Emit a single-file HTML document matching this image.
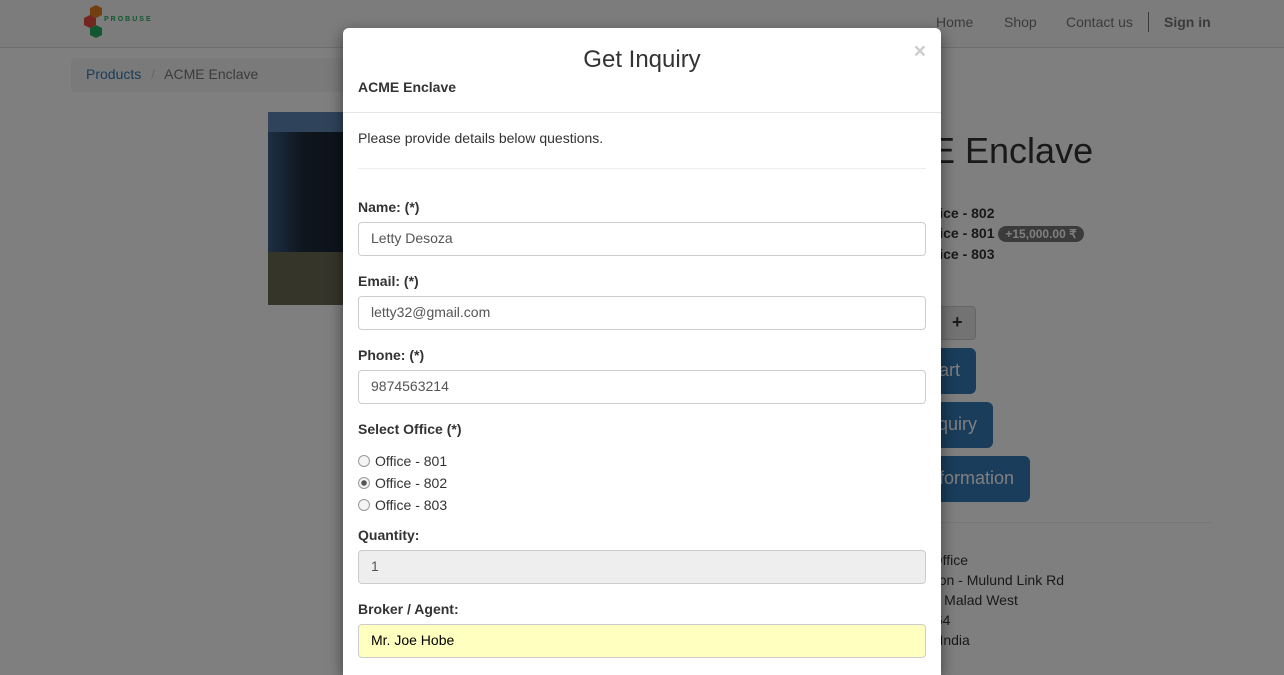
<!DOCTYPE html>
<html><head><meta charset="utf-8"><style>
*{box-sizing:border-box}
html,body{height:675px;overflow:hidden}
body{margin:0;width:1284px;font-family:"Liberation Sans",sans-serif;font-size:14px;color:#333;background:#fff;position:relative}
.nav{position:absolute;left:0;top:0;width:1284px;height:48px;border-bottom:1px solid #ddd;background:#f8f8f8}
.nav a{position:absolute;top:14px;color:#777;font-size:14px}
.bc{position:absolute;left:71px;top:58px;width:290px;height:34px;background:#f5f5f5;border-radius:4px;padding:8px 15px;font-size:14px}
.bc a{color:#337ab7}
.img{position:absolute;left:268px;top:112px;width:90px;height:193px;background:linear-gradient(90deg,#3a5f88 0,#1d2a3a 40%,#1c2735 100%)}
.img:before{content:"";position:absolute;left:0;top:0;width:90px;height:20px;background:#5e86b4}
.img:after{content:"";position:absolute;left:0;top:140px;width:90px;height:53px;background:#6b6b55}
.r{position:absolute;color:#333;white-space:nowrap}
.btn{position:absolute;background:#337ab7;color:#fff;border-radius:6px;font-size:18px;white-space:nowrap;overflow:hidden}
.btn span{position:absolute;right:16px;top:12px}
.ov{position:absolute;left:0;top:0;width:1284px;height:675px;background:rgba(0,0,0,.5)}
.m{position:absolute;left:343px;top:28px;width:598px;height:647px;background:#fff;border-radius:6px 6px 0 0;box-shadow:0 5px 15px rgba(0,0,0,.5)}
.hd{height:85px;border-bottom:1px solid #e5e5e5;position:relative}
.hd h4{margin:0;position:absolute;top:18px;width:100%;text-align:center;font-size:24px;font-weight:normal}
.hd .x{position:absolute;right:15px;top:12px;font-size:21px;font-weight:bold;color:#000;opacity:.2}
.hd b{position:absolute;left:15px;top:51px}
.lab{position:absolute;left:15px;font-weight:bold}
.in{position:absolute;left:15px;width:568px;height:34px;border:1px solid #ccc;border-radius:4px;padding:7px 12px;color:#555}
.rad{position:absolute;left:15px}
.rad i{display:inline-block;width:12px;height:12px;border:1px solid #999;border-radius:50%;margin-right:5px;vertical-align:-1px;background:#f4f4f4}
</style></head><body>
<div class="nav">
<svg style="position:absolute;left:82px;top:5px" width="70" height="36"><polygon points="14,0 20,3 20,10 14,13 8,10 8,3" fill="#e67e22"/><polygon points="8,10 14,13 14,20 8,23 2,20 2,13" fill="#e74c3c"/><polygon points="14,20 20,23 20,30 14,33 8,30 8,23" fill="#27ae60"/><text x="22" y="16" font-size="7" font-weight="bold" fill="#27ae60" letter-spacing="2" font-family="Liberation Sans">PROBUSE</text></svg>
<a style="left:936px">Home</a><a style="left:1004px">Shop</a><a style="left:1066px">Contact us</a>
<span style="position:absolute;left:1148px;top:12px;width:1px;height:20px;background:#777"></span>
<a style="left:1164px;font-weight:bold">Sign in</a></div>
<div class="bc"><a>Products</a> <span style="color:#ccc;padding:0 6px">/</span> <span style="color:#777">ACME Enclave</span></div>
<div class="img"></div>
<div class="r" style="left:851px;top:130px;font-size:36px">ACME Enclave</div>
<div class="r" style="left:919px;top:203px;font-weight:bold;line-height:20px">Office - 802<br>Office - 801 <span style="background:#777;color:#fff;border-radius:10px;padding:1px 7px;font-size:12px">+15,000.00 ₹</span><br>Office - 803</div>
<div class="r" style="left:930px;top:276px;font-weight:bold;font-size:18px">₹</div>
<div style="position:absolute;left:900px;top:306px;width:76px;height:34px;border:1px solid #ccc;border-radius:4px;background:#e6e6e6;font-weight:bold;font-size:18px;padding:5px 0 0 51px">+</div>
<div class="btn" style="left:880px;top:348px;width:96px;height:46px"><span>Add to Cart</span></div>
<div class="btn" style="left:880px;top:402px;width:113px;height:46px"><span>Get Inquiry</span></div>
<div class="btn" style="left:880px;top:456px;width:150px;height:46px"><span>More Information</span></div>
<div style="position:absolute;left:900px;top:522px;width:311px;border-top:1px solid #eee"></div>
<div class="r" style="left:850px;top:550px;line-height:20px">&nbsp;&nbsp;&nbsp;&nbsp;&nbsp;&nbsp;&nbsp;&nbsp;&nbsp;&nbsp;&nbsp;&nbsp;&nbsp;&nbsp;&nbsp;&nbsp;&nbsp;&nbsp;&nbsp;&nbsp;&nbsp;Office<br>Malad Goregaon - Mulund Link Rd<br>Bangur Nagar, Malad West<br>Mumbai 400064<br>&nbsp;&nbsp;&nbsp;&nbsp;&nbsp;&nbsp;&nbsp;&nbsp;&nbsp;&nbsp;&nbsp;&nbsp;&nbsp;&nbsp;&nbsp;&nbsp;&nbsp;&nbsp;&nbsp;&nbsp;&nbsp;&nbsp;&nbsp;India</div>
<div class="ov"></div>
<div class="m">
<div class="hd"><h4>Get Inquiry</h4><span class="x">×</span><b>ACME Enclave</b></div>
<div style="position:absolute;left:15px;top:102px">Please provide details below questions.</div>
<div style="position:absolute;left:15px;top:140px;width:568px;border-top:1px solid #eee"></div>
<div class="lab" style="top:171px">Name: (*)</div><div class="in" style="top:194px">Letty Desoza</div>
<div class="lab" style="top:245px">Email: (*)</div><div class="in" style="top:268px">letty32@gmail.com</div>
<div class="lab" style="top:319px">Phone: (*)</div><div class="in" style="top:342px">9874563214</div>
<div class="lab" style="top:393px">Select Office (*)</div>
<div class="rad" style="top:425px"><i></i>Office - 801</div>
<div class="rad" style="top:447px"><i style="background:radial-gradient(#555 0 2.5px,#f4f4f4 3px)"></i>Office - 802</div>
<div class="rad" style="top:469px"><i></i>Office - 803</div>
<div class="lab" style="top:499px">Quantity:</div><div class="in" style="top:522px;background:#eee">1</div>
<div class="lab" style="top:573px">Broker / Agent:</div><div class="in" style="top:596px;background:#ffffc0;color:#000">Mr. Joe Hobe</div>
</div>
</body></html>
